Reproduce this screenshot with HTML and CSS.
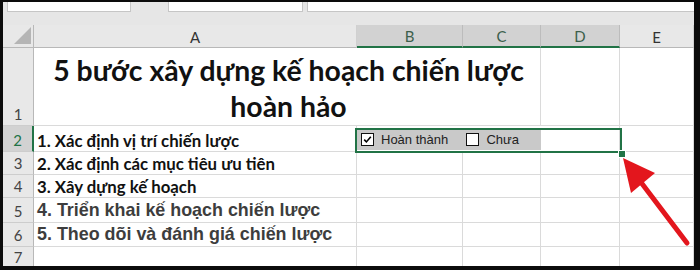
FILE: index.html
```html
<!DOCTYPE html>
<html lang="vi">
<head>
    <meta charset="UTF-8">
    <meta name="viewport" content="width=device-width, initial-scale=1.0">
    <title>5 bước xây dựng kế hoạch chiến lược</title>
    <link rel="stylesheet" href="styles.css">
</head>
<body>
<div class="frame">
    <div class="toolbar">
        <div class="name-box"></div>
        <div class="tool-gap"></div>
        <div class="func-box"></div>
        <div class="formula-box"></div>
    </div>

    <div class="sheet">
        <div class="corner"><span class="corner-tri"></span></div>
        <div class="col-head">A</div>
        <div class="col-head sel">B</div>
        <div class="col-head sel">C</div>
        <div class="col-head sel">D</div>
        <div class="col-head">E</div>

        <div class="row-head">1</div>
        <div class="cell title span-3">5 bước xây dựng kế hoạch chiến lược<br>hoàn hảo</div>
        <div class="cell"></div>
        <div class="cell"></div>

        <div class="row-head sel">2</div>
        <div class="cell bold">1. Xác định vị trí chiến lược</div>
        <div class="cell span-2 controls">
            <div class="check-ctl wide">
                <span class="box">
                    <svg viewBox="0 0 11 11" width="11" height="11"><path d="M2.2 5.6 L4.4 7.9 L8.8 2.8" fill="none" stroke="#000" stroke-width="1.6"/></svg>
                </span>
                <span class="ctl-label">Hoàn thành</span>
            </div>
            <div class="check-ctl">
                <span class="box"></span>
                <span class="ctl-label">Chưa</span>
            </div>
        </div>
        <div class="cell"></div>
        <div class="cell"></div>

        <div class="row-head">3</div>
        <div class="cell bold">2. Xác định các mục tiêu ưu tiên</div>
        <div class="cell"></div>
        <div class="cell"></div>
        <div class="cell"></div>
        <div class="cell"></div>

        <div class="row-head">4</div>
        <div class="cell bold">3. Xây dựng kế hoạch</div>
        <div class="cell"></div>
        <div class="cell"></div>
        <div class="cell"></div>
        <div class="cell"></div>

        <div class="row-head">5</div>
        <div class="cell plain">4. Triển khai kế hoạch chiến lược</div>
        <div class="cell"></div>
        <div class="cell"></div>
        <div class="cell"></div>
        <div class="cell"></div>

        <div class="row-head">6</div>
        <div class="cell plain">5. Theo dõi và đánh giá chiến lược</div>
        <div class="cell"></div>
        <div class="cell"></div>
        <div class="cell"></div>
        <div class="cell"></div>

        <div class="row-head">7</div>
        <div class="cell"></div>
        <div class="cell"></div>
        <div class="cell"></div>
        <div class="cell"></div>
        <div class="cell"></div>
    </div>

    <!-- selection B2:D2 with fill handle -->
    <div class="selection"></div>
    <div class="fill-handle"></div>

    <svg class="arrow" viewBox="0 0 700 270" width="700" height="270">
        <line x1="687" y1="243" x2="640" y2="181" stroke="#e3161d" stroke-width="5" stroke-linecap="round"/>
        <polygon points="623,158 655,173 631,193" fill="#e3161d"/>
    </svg>
</div>
</body>
</html>
```

FILE: styles.css
```css
:root {
    --grid-line: #dadada;
    --head-bg: #e8e8e8;
    --head-sel: #d2d2d2;
    --head-line: #b8b8b8;
    --excel-green: #217346;
}

html, body {
    margin: 0;
    padding: 0;
}

body {
    background-color: #0c0c0c;
    width: 700px;
    height: 270px;
    overflow: hidden;
}

.frame {
    position: relative;
    margin: 2px 6px 0 3px;
    height: 264px;
    background-color: #fff;
    overflow: hidden;
}

/* formula bar, cut off at the top */
.toolbar {
    height: 23px;
    box-sizing: border-box;
    background-color: #e6e6e6;
    display: flex;
    align-items: flex-start;
}

.name-box, .func-box, .formula-box {
    height: 10px;
    background-color: #fff;
    border: 1px solid #c6c6c6;
    border-top: none;
    box-sizing: border-box;
}

.name-box {
    margin-left: 4px;
    width: 124px;
}

.tool-gap {
    width: 37px;
}

.func-box {
    width: 135px;
}

.formula-box {
    margin-left: 4px;
    flex: 1;
    border-right: none;
}

/* grid */
.sheet {
    display: grid;
    grid-template-columns: 31px 323px 106px 78px 79px 1fr;
    grid-template-rows: 23px 78px 26px 23px 23px 25px 24px 1fr;
    height: 241px;
    font-family: Lato, "Open Sans", sans-serif;
}

.corner {
    background-color: var(--head-bg);
    border-right: 1px solid var(--head-line);
    border-bottom: 1px solid var(--head-line);
    position: relative;
}

.corner-tri {
    position: absolute;
    right: 2px;
    bottom: 3px;
    width: 0;
    height: 0;
    border-left: 17px solid transparent;
    border-bottom: 17px solid #b5b5b5;
}

.col-head {
    background-color: var(--head-bg);
    border-right: 1px solid #d0d0d0;
    border-bottom: 1px solid var(--head-line);
    display: flex;
    align-items: center;
    justify-content: center;
    font-size: 15px;
    color: #333;
    padding-top: 1px;
}

.col-head.sel {
    background-color: var(--head-sel);
    border-right-color: #bcbcbc;
    border-bottom: 2px solid var(--excel-green);
    color: #3c5f4b;
}

.row-head {
    background-color: var(--head-bg);
    border-right: 1px solid var(--head-line);
    border-bottom: 1px solid #cdcdcd;
    display: flex;
    align-items: flex-end;
    justify-content: center;
    font-size: 15px;
    color: #444;
    line-height: 21px;
}

.row-head.sel {
    background-color: var(--head-sel);
    border-right: 2px solid var(--excel-green);
    color: var(--excel-green);
}

.cell {
    border-right: 1px solid var(--grid-line);
    border-bottom: 1px solid var(--grid-line);
    display: flex;
    align-items: flex-end;
    padding-left: 3px;
    padding-bottom: 2px;
    white-space: nowrap;
    min-width: 0;
}

.span-2 {
    grid-column: span 2;
}

.span-3 {
    grid-column: span 3;
}

.title {
    justify-content: center;
    text-align: center;
    font-weight: 700;
    font-size: 28.4px;
    line-height: 36px;
    color: #111;
    padding-bottom: 1px;
}

.bold {
    font-weight: 700;
    font-size: 16.8px;
    color: #111;
    padding-bottom: 0;
}

.plain {
    font-family: "Liberation Sans", Arial, sans-serif;
    font-weight: 700;
    font-size: 17.9px;
    color: #3d3d3d;
    padding-bottom: 1px;
}

/* form checkboxes floating over B2:C2 */
.controls {
    padding: 0;
    align-items: flex-start;
    border-right: none;
}

.check-ctl {
    margin-top: 2px;
    height: 22px;
    width: 79px;
    background-color: #c9c9c9;
    display: flex;
    align-items: center;
    gap: 7px;
    padding-left: 4px;
    box-sizing: border-box;
}

.check-ctl.wide {
    width: 106px;
}

.box {
    width: 11px;
    height: 11px;
    background-color: #fff;
    border: 1px solid #111;
    display: flex;
    align-items: center;
    justify-content: center;
}

.box svg {
    display: block;
}

.ctl-label {
    font-family: "Liberation Sans", Arial, sans-serif;
    font-size: 13px;
    color: #222;
}

.selection {
    position: absolute;
    left: 352px;
    top: 126px;
    width: 267px;
    height: 25px;
    border: 2px solid var(--excel-green);
    box-sizing: border-box;
}

.fill-handle {
    position: absolute;
    left: 615px;
    top: 148px;
    width: 6px;
    height: 6px;
    background-color: var(--excel-green);
    border: 1px solid #fff;
}

.arrow {
    position: absolute;
    left: -3px;
    top: -2px;
}
```
